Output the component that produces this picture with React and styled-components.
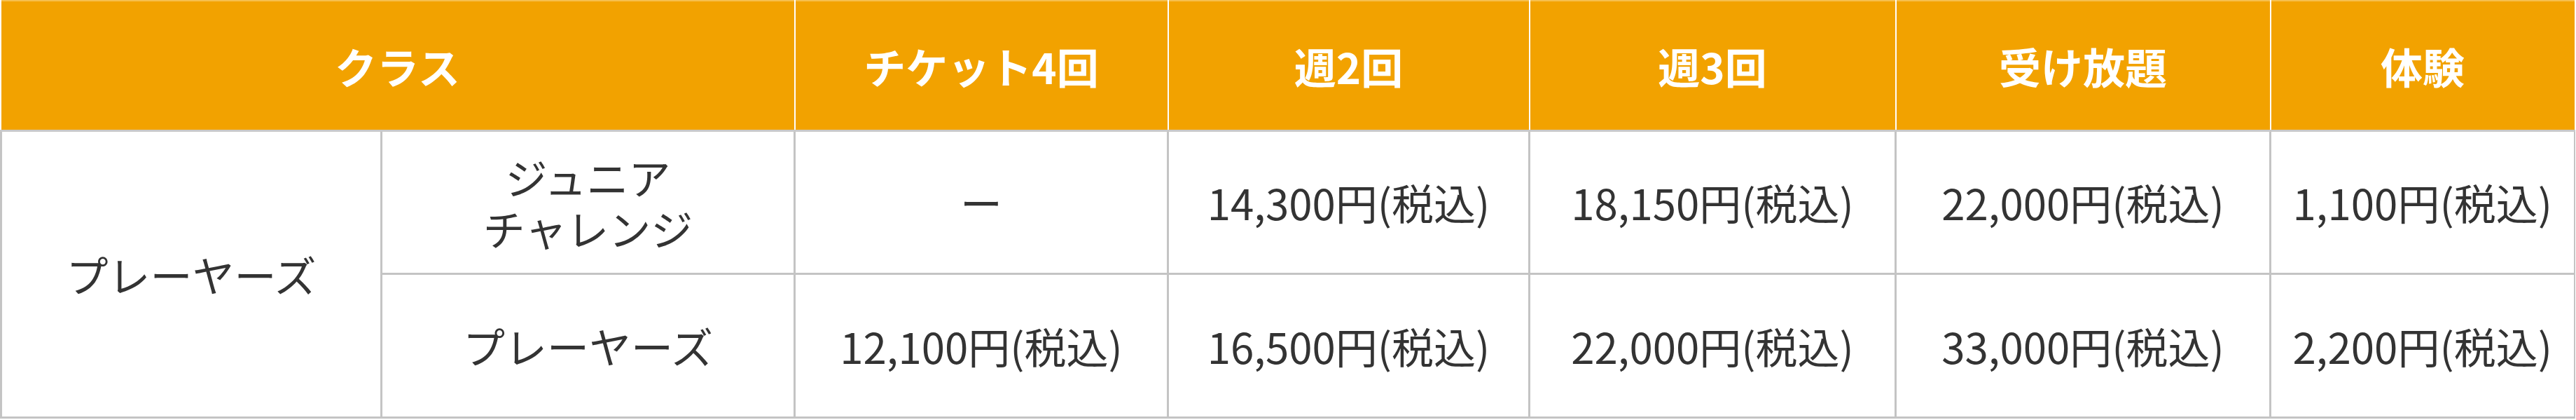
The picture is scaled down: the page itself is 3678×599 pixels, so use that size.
import React from "react";
import styled, { createGlobalStyle } from "styled-components";

const Global = createGlobalStyle`
  html, body { margin: 0; padding: 0; background: #ffffff; }
  body { font-family: "Noto Sans CJK JP", "Noto Sans", sans-serif; }
`;

const Table = styled.table`
  width: 3674px;
  border-collapse: collapse;
  table-layout: fixed;
  font-family: "Noto Sans CJK JP", "Noto Sans", sans-serif;
`;

const HeadRow = styled.tr`
  height: 185px;
`;

const BodyRow = styled.tr`
  height: ${(p) => p.$h}px;
`;

const HeadCell = styled.th`
  background: #f2a200;
  color: #ffffff;
  font-size: 60px;
  font-weight: 700;
  text-align: center;
  vertical-align: middle;
  padding: 0;
  border-top: 2px solid #f6bf4e;
  border-left: 2px solid #ffffff;
  border-right: 2px solid #ffffff;
  border-bottom: 3px solid #c9c9c9;
  &:first-child { border-left: none; }
  &:last-child { border-right: none; }
`;

const Cell = styled.td`
  background: #ffffff;
  color: #333333;
  font-size: 60px;
  font-weight: 400;
  line-height: 1.22;
  text-align: center;
  vertical-align: middle;
  padding: 0;
  border: 2px solid #c4c4c4;
  border-left-width: 3px;
  border-bottom-width: 3px;
`;

const Line = styled.span`
  display: block;
`;

const cols = [543, 590, 533, 516, 523, 535, 434];

const prices = [
  ["ー", "14,300円(税込)", "18,150円(税込)", "22,000円(税込)", "1,100円(税込)"],
  ["12,100円(税込)", "16,500円(税込)", "22,000円(税込)", "33,000円(税込)", "2,200円(税込)"],
];

export default function App() {
  return (
    <>
      <Global />
      <Table>
        <colgroup>
          {cols.map((w, i) => (
            <col key={i} style={{ width: w }} />
          ))}
        </colgroup>
        <thead>
          <HeadRow>
            <HeadCell colSpan={2}>クラス</HeadCell>
            <HeadCell>チケット4回</HeadCell>
            <HeadCell>週2回</HeadCell>
            <HeadCell>週3回</HeadCell>
            <HeadCell>受け放題</HeadCell>
            <HeadCell>体験</HeadCell>
          </HeadRow>
        </thead>
        <tbody>
          <BodyRow $h={204}>
            <Cell rowSpan={2}>プレーヤーズ</Cell>
            <Cell>
              <Line>ジュニア</Line>
              <Line>チャレンジ</Line>
            </Cell>
            {prices[0].map((p, i) => (
              <Cell key={i}>{p}</Cell>
            ))}
          </BodyRow>
          <BodyRow $h={205}>
            <Cell>プレーヤーズ</Cell>
            {prices[1].map((p, i) => (
              <Cell key={i}>{p}</Cell>
            ))}
          </BodyRow>
        </tbody>
      </Table>
    </>
  );
}
